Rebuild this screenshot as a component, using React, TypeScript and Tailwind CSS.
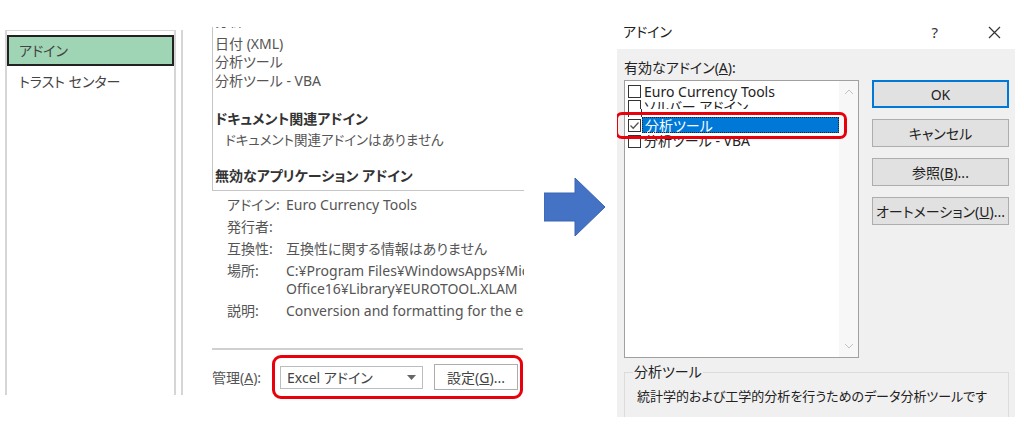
import React from "react";

const F = "font-['Noto_Sans','Noto_Sans_CJK_JP',sans-serif] [font-feature-settings:'palt']";

function Check({ checked }: { checked?: boolean }) {
  return (
    <div className="w-[13px] h-[13px] border border-[#333] bg-white flex items-center justify-center shrink-0">
      {checked && (
        <svg width="11" height="11" viewBox="0 0 11 11">
          <path d="M1.5 5.5 L4.2 8.2 L9.5 2.5" fill="none" stroke="#555" strokeWidth="1.3" />
        </svg>
      )}
    </div>
  );
}

function Btn({ children, primary }: { children: React.ReactNode; primary?: boolean }) {
  return (
    <div
      className={`h-[28px] w-[137px] flex items-center justify-center bg-[#e1e1e1] text-[14px] text-[#222] ${
        primary ? "border-2 border-[#0078d7]" : "border border-[#adadad]"
      }`}
    >
      {children}
    </div>
  );
}

export default function App() {
  return (
    <div className={`w-[1024px] h-[433px] bg-white flex relative overflow-hidden ${F}`}>
      {/* Left nav */}
      <div className="ml-[5px] mt-[30px] w-[171px] h-[365px] border-l-2 border-r-2 border-t border-[#d6d6d6] pt-[4px] flex flex-col">
        <div className="h-[31px] bg-[#9fd5b5] border-2 border-[#222] flex items-center pl-[10px] text-[14px] text-[#444]">
          アドイン
        </div>
        <div className="h-[30px] flex items-center pl-[12px] text-[14px] text-[#444]">トラスト センター</div>
      </div>
      {/* divider */}
      <div className="ml-[5px] mt-[30px] w-[2px] h-[365px] bg-[#d6d6d6]" />

      {/* Middle */}
      <div className="ml-[29px] w-[312px] flex flex-col text-[14px] text-[#555] overflow-hidden">
        <div className="mt-[27px] h-[164px] border-l border-b border-[#c6c6c6] overflow-hidden">
          <div className="-mt-[11px] pl-[2px] flex flex-col leading-[18.5px]">
            <div className="-translate-y-[4px]">分析ツール - ユーロ</div>
            <div>日付 (XML)</div>
            <div>分析ツール</div>
            <div>分析ツール - VBA</div>
            <div className="h-[20px]" />
            <div className="font-bold text-[#333]">ドキュメント関連アドイン</div>
            <div className="pl-[10px] text-[13.5px] mt-[2px]">ドキュメント関連アドインはありません</div>
            <div className="h-[18px]" />
            <div className="font-bold text-[#333]">無効なアプリケーション アドイン</div>
          </div>
        </div>
        <div className="pl-[15px] mt-[3px] flex flex-col leading-[18px] whitespace-nowrap">
          <div className="flex h-[22px] items-center">
            <span className="w-[59px] shrink-0">アドイン:</span>
            <span>Euro Currency Tools</span>
          </div>
          <div className="flex h-[22px] items-center">
            <span className="w-[59px] shrink-0">発行者:</span>
          </div>
          <div className="flex h-[22px] items-center">
            <span className="w-[59px] shrink-0">互換性:</span>
            <span>互換性に関する情報はありません</span>
          </div>
          <div className="flex mt-[2px]">
            <span className="w-[59px] shrink-0">場所:</span>
            <span className="flex flex-col">
              <span>C:¥Program Files¥WindowsApps¥Microsoft</span>
              <span>Office16¥Library¥EUROTOOL.XLAM</span>
            </span>
          </div>
          <div className="flex h-[22px] items-center mt-[2px]">
            <span className="w-[59px] shrink-0">説明:</span>
            <span>Conversion and formatting for the euro currency</span>
          </div>
        </div>
        <div className="mt-[26px] w-[311px] h-[2px] bg-[#d0d0d0] shrink-0" />
        <div className="mt-[5px] flex items-center">
          <span className="w-[60px] shrink-0 text-[#555] whitespace-nowrap">
            管理(<span className="underline">A</span>):
          </span>
          <div className="w-[251px] h-[44px] border-[3px] border-[#e8000b] rounded-[9px] flex items-center pl-[5px] shrink-0">
            <div className="w-[143px] h-[23px] border border-[#bdbdbd] bg-white flex items-center justify-between px-[6px] text-[#444] shrink-0">
              <span>Excel アドイン</span>
              <svg width="9" height="5" viewBox="0 0 9 5">
                <path d="M0 0 H9 L4.5 5 Z" fill="#666" />
              </svg>
            </div>
            <div className="ml-[11px] w-[84px] h-[26px] border border-[#adadad] bg-white flex items-center justify-center text-[#444] shrink-0">
              設定(<span className="underline">G</span>)...
            </div>
          </div>
        </div>
      </div>

      {/* Arrow */}
      <div className="ml-[20px] mt-[178px] w-[62px] h-[59px]">
        <svg width="62" height="59" viewBox="0 0 62 59">
          <path d="M0 15 H31 V0 L61 29 L31 58 V43 H0 Z" fill="#4472c4" stroke="#3b64b0" strokeWidth="1" />
        </svg>
      </div>

      {/* Dialog */}
      <div className="ml-[11px] w-[398px] h-[417px] flex flex-col">
        <div className="h-[49px] bg-white flex items-end pb-[7px] pl-[6px] text-[14px] text-[#222]">
          <span>アドイン</span>
          <span className="ml-auto mr-[50px] text-[15px] text-[#333] mb-[-1px]">?</span>
          <svg className="mr-[14px] mb-[3px]" width="13" height="13" viewBox="0 0 13 13">
            <path d="M1 1 L12 12 M12 1 L1 12" stroke="#333" strokeWidth="1.2" />
          </svg>
        </div>
        <div className="flex-1 bg-[#f0f0f0] overflow-hidden flex flex-col pl-[7px] pr-[6px]">
          <div className="mt-[10px] text-[14px] text-[#222] leading-[18px]">
            有効なアドイン(<span className="underline">A</span>):
          </div>
          <div className="flex mt-[3px]">
            <div className="w-[235px] h-[278px] border border-[#a0a0a0] bg-white flex relative">
              <div className="flex-1 pl-[3px] pt-[2px] flex flex-col text-[14px] text-[#222]">
                <div className="h-[17px] flex items-center gap-[3px]">
                  <Check />
                  <span className="leading-[17px]">Euro Currency Tools</span>
                </div>
                <div className="h-[9px] flex items-start gap-[3px] overflow-hidden">
                  <Check />
                  <span className="leading-[17px] mt-[-2px]">ソルバー アドイン</span>
                </div>
                <div className="h-[8px] flex items-start">
                  <div className="w-[1px] h-[8px] border-l border-[#333]" />
                  <div className="ml-[12px] w-[1px] h-[8px] border-l border-[#333]" />
                </div>
                <div className="h-[16px] flex items-center">
                  <Check checked />
                  <div className="ml-[1px] flex-1 h-[16px] bg-[#0078d7] text-white flex items-center pl-[3px] outline-1 outline-dotted outline-[#222] -outline-offset-1">
                    分析ツール
                  </div>
                </div>
                <div className="h-[13px] mt-[2px] flex items-end gap-[3px] overflow-hidden">
                  <Check />
                  <span className="leading-[17px] mb-[-1px]">分析ツール - VBA</span>
                </div>
              </div>
              <div className="w-[19px] bg-[#f7f7f7] flex flex-col items-center justify-between py-[8px]">
                <svg width="10" height="6" viewBox="0 0 10 6">
                  <path d="M1 5 L5 1 L9 5" fill="none" stroke="#c2c2c2" strokeWidth="1" />
                </svg>
                <svg width="10" height="6" viewBox="0 0 10 6">
                  <path d="M1 1 L5 5 L9 1" fill="none" stroke="#c2c2c2" strokeWidth="1" />
                </svg>
              </div>
              <div className="absolute left-[-10px] top-[31px] w-[232px] h-[27px] border-[3px] border-[#e8000b] rounded-[7px]" />
            </div>
            <div className="ml-[13px] flex flex-col gap-[11px]">
              <Btn primary>OK</Btn>
              <Btn>キャンセル</Btn>
              <Btn>
                参照(<span className="underline">B</span>)...
              </Btn>
              <Btn>
                オートメーション(<span className="underline">U</span>)...
              </Btn>
            </div>
          </div>
          <div className="mt-[14px] w-[385px] h-[80px] border border-[#dcdcdc] relative shrink-0">
            <span className="absolute left-[8px] top-[-11px] bg-[#f0f0f0] px-[1px] text-[14px] text-[#222] leading-[20px]">
              分析ツール
            </span>
            <div className="mt-[14px] pl-[12px] text-[13px] text-[#222] whitespace-nowrap">
              統計学的および工学的分析を行うためのデータ分析ツールです
            </div>
          </div>
        </div>
      </div>
    </div>
  );
}
